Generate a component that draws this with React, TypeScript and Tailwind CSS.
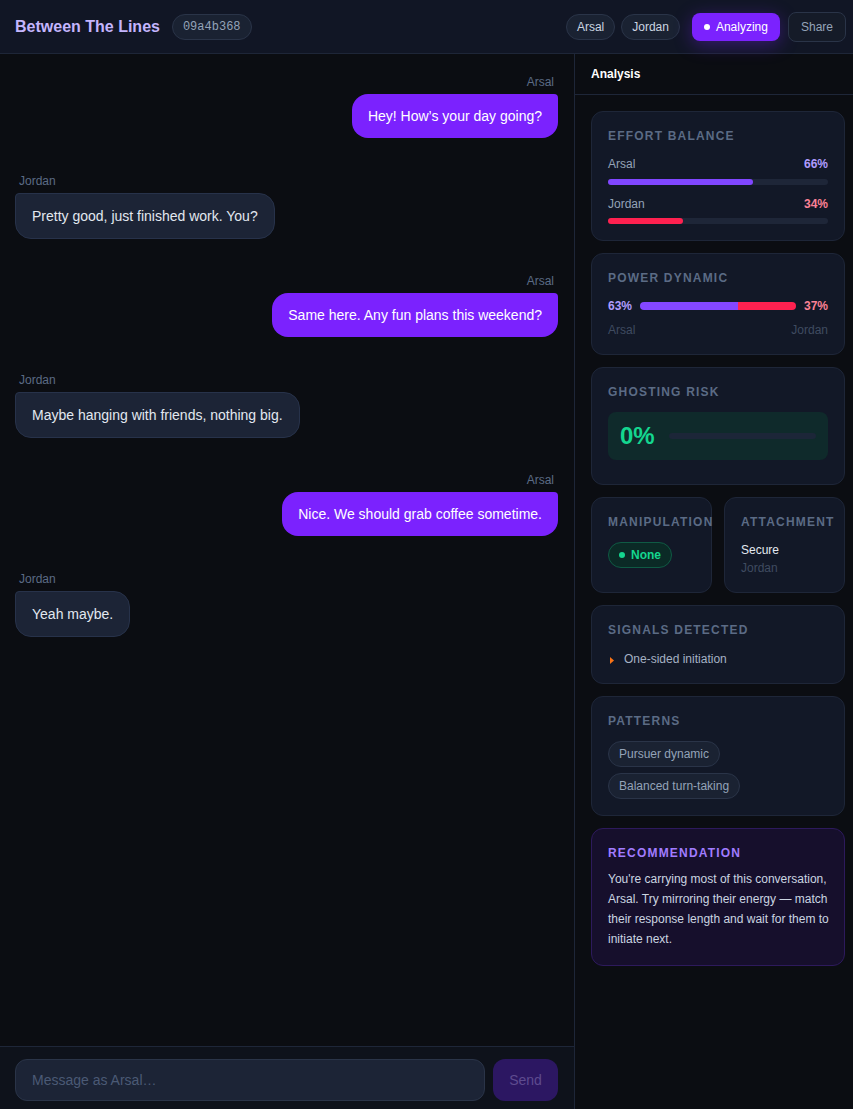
import React from "react";

type Msg = { from: "Arsal" | "Jordan"; text: string };

const messages: Msg[] = [
  { from: "Arsal", text: "Hey! How’s your day going?" },
  { from: "Jordan", text: "Pretty good, just finished work. You?" },
  { from: "Arsal", text: "Same here. Any fun plans this weekend?" },
  { from: "Jordan", text: "Maybe hanging with friends, nothing big." },
  { from: "Arsal", text: "Nice. We should grab coffee sometime." },
  { from: "Jordan", text: "Yeah maybe." },
];

function CardTitle({ children, className = "" }: { children: React.ReactNode; className?: string }) {
  return (
    <div
      className={`text-xs leading-4 font-bold tracking-widest uppercase whitespace-nowrap ${
        className || "text-[#5b6b85]"
      }`}
    >
      {children}
    </div>
  );
}

function Card({ children, className = "" }: { children: React.ReactNode; className?: string }) {
  return (
    <div
      className={`rounded-xl border p-4 ${
        className || "bg-[#121827] border-[#1e2638]"
      }`}
    >
      {children}
    </div>
  );
}

export default function App() {
  return (
    <div
      className="h-screen flex flex-col bg-[#0b0d12] text-[#e2e8f0] overflow-hidden"
      style={{ fontFamily: '"Liberation Sans", Arial, sans-serif' }}
    >
      {/* header */}
      <header className="h-[54px] shrink-0 flex items-center justify-between pl-[15px] pr-[7px] bg-[#111625] border-b border-[#1e2638]">
        <div className="flex items-center gap-3">
          <h1 className="text-base font-bold text-[#c4b5fd]">Between The Lines</h1>
          <span className="h-[26px] flex items-center px-[10px] rounded-full border border-[#2a3448] bg-[#1a2232] text-xs text-[#94a3b8] font-['Liberation_Mono',monospace]">
            09a4b368
          </span>
        </div>
        <div className="flex items-center">
          <div className="flex items-center gap-1.5">
            <span className="h-[26px] flex items-center px-[10px] rounded-full border border-[#2a3448] bg-[#1a2232] text-xs text-[#cbd5e1]">
              Arsal
            </span>
            <span className="h-[26px] flex items-center px-[10px] rounded-full border border-[#2a3448] bg-[#1a2232] text-xs text-[#cbd5e1]">
              Jordan
            </span>
          </div>
          <button
            type="button"
            className="ml-3 h-7 flex items-center gap-1.5 px-3 rounded-lg bg-[#7b22fe] text-xs text-white shadow-[0_4px_18px_rgba(123,34,254,0.35)]"
          >
            <span className="w-1.5 h-1.5 rounded-full bg-white" />
            Analyzing
          </button>
          <button
            type="button"
            className="ml-2 h-[30px] flex items-center px-3 rounded-lg border border-[#2a3448] bg-[#151b28] text-xs text-[#94a3b8]"
          >
            Share
          </button>
        </div>
      </header>

      <div className="flex-1 flex min-h-0">
        {/* chat */}
        <div className="w-[575px] shrink-0 flex flex-col border-r border-[#1e2638]">
          <div className="flex-1 overflow-hidden px-4 pt-5 flex flex-col gap-[34.6px]">
            {messages.map((m, i) =>
              m.from === "Arsal" ? (
                <div key={i} className="flex flex-col items-end">
                  <div className="text-xs leading-4 text-[#5b6b85] px-1 mb-1">{m.from}</div>
                  <div className="px-4 py-3 text-sm leading-5 text-white bg-[#7b22fe] rounded-2xl rounded-tr-[4px]">
                    {m.text}
                  </div>
                </div>
              ) : (
                <div key={i} className="flex flex-col items-start -ml-px">
                  <div className="text-xs leading-4 text-[#5b6b85] px-1 mb-1">{m.from}</div>
                  <div className="px-4 py-3 text-sm leading-5 text-[#e2e8f0] bg-[#1c2436] border border-[#27324a] rounded-2xl rounded-tl-[4px]">
                    {m.text}
                  </div>
                </div>
              )
            )}
          </div>
          <div className="shrink-0 border-t border-[#1e2638] bg-[#0e121b] pl-[15px] pr-4 pt-3 pb-2 flex gap-2">
            <input
              placeholder="Message as Arsal…"
              className="flex-1 h-[42px] rounded-xl border border-[#2a3448] bg-[#1c2436] px-4 text-sm text-white placeholder-[#4b5a75] outline-none"
            />
            <button
              type="button"
              className="h-[42px] w-[65px] rounded-xl bg-[#2c1762] text-sm text-[#5e4b8f]"
            >
              Send
            </button>
          </div>
        </div>

        {/* analysis */}
        <div className="flex-1 min-w-0 flex flex-col">
          <div className="h-[41px] shrink-0 flex items-center px-4 border-b border-[#1e2638] text-xs font-bold text-white">
            Analysis
          </div>
          <div className="flex-1 overflow-hidden pl-4 pr-2 pt-4 flex flex-col gap-3">
            <Card>
              <CardTitle>Effort Balance</CardTitle>
              <div className="mt-3 flex justify-between text-xs leading-4">
                <span className="text-[#94a3b8]">Arsal</span>
                <span className="font-bold text-[#b09cff]">66%</span>
              </div>
              <div className="mt-[7px] h-1.5 rounded-full bg-[#1e2638]">
                <div className="h-full rounded-full bg-[#8046ff]" style={{ width: "66%" }} />
              </div>
              <div className="mt-[11px] flex justify-between text-xs leading-4">
                <span className="text-[#94a3b8]">Jordan</span>
                <span className="font-bold text-[#fb8195]">34%</span>
              </div>
              <div className="mt-[6px] h-1.5 rounded-full bg-[#1e2638]">
                <div className="h-full rounded-full bg-[#ff2150]" style={{ width: "34%" }} />
              </div>
            </Card>

            <Card>
              <CardTitle>Power Dynamic</CardTitle>
              <div className="mt-3 flex items-center gap-2 text-xs leading-4 font-bold">
                <span className="text-[#b09cff]">63%</span>
                <div className="flex-1 h-2 rounded-full overflow-hidden flex">
                  <div className="h-full bg-[#8447ff]" style={{ width: "63%" }} />
                  <div className="h-full flex-1 bg-[#ff2150]" />
                </div>
                <span className="text-[#fb8195]">37%</span>
              </div>
              <div className="mt-2 flex justify-between text-xs leading-4 text-[#3f4b60]">
                <span>Arsal</span>
                <span>Jordan</span>
              </div>
            </Card>

            <Card>
              <CardTitle>Ghosting Risk</CardTitle>
              <div className="mt-3 mb-2 rounded-lg bg-[#0f2a2b] px-3 py-2 flex items-center gap-3.5">
                <span className="text-2xl font-bold text-[#14d68f]">0%</span>
                <div className="flex-1 h-1.5 rounded-full bg-[#1c2638]" />
              </div>
            </Card>

            <div className="grid grid-cols-2 gap-3">
              <Card>
                <CardTitle>Manipulation</CardTitle>
                <div className="mt-3 inline-flex items-center gap-1.5 h-[26px] px-[10px] rounded-full border border-[#0f5a44] bg-[#0b2a26] text-xs font-bold text-[#14d68f]">
                  <span className="w-1.5 h-1.5 rounded-full bg-[#14d68f]" />
                  None
                </div>
              </Card>
              <Card>
                <CardTitle>Attachment</CardTitle>
                <div className="mt-3 text-xs leading-4 text-[#e2e8f0]">Secure</div>
                <div className="mt-0.5 text-xs leading-4 text-[#3f4b60]">Jordan</div>
              </Card>
            </div>

            <Card>
              <CardTitle>Signals Detected</CardTitle>
              <div className="mt-3 h-[17px] flex items-center gap-2.5 text-xs leading-4 text-[#a5b1c4]">
                <svg width="4" height="7" viewBox="0 0 4 7" className="mt-1 ml-0.5">
                  <path d="M0 0 L4 3.5 L0 7 Z" fill="#f97316" />
                </svg>
                One-sided initiation
              </div>
            </Card>

            <Card>
              <CardTitle>Patterns</CardTitle>
              <div className="mt-3 flex flex-wrap gap-1.5">
                <span className="h-[26px] flex items-center px-[10px] rounded-full border border-[#2a3448] bg-[#1a2232] text-xs text-[#94a3b8]">
                  Pursuer dynamic
                </span>
                <span className="h-[26px] flex items-center px-[10px] rounded-full border border-[#2a3448] bg-[#1a2232] text-xs text-[#94a3b8]">
                  Balanced turn-taking
                </span>
              </div>
            </Card>

            <Card className="bg-[#160f2c] border-[#2d1a5c]">
              <CardTitle className="text-[#a17cff]">Recommendation</CardTitle>
              <p className="mt-2 -mr-1 text-xs leading-5 text-[#cbd5e1]">
                You're carrying most of this conversation, Arsal. Try mirroring their energy — match
                their response length and wait for them to initiate next.
              </p>
            </Card>
          </div>
        </div>
      </div>
    </div>
  );
}
